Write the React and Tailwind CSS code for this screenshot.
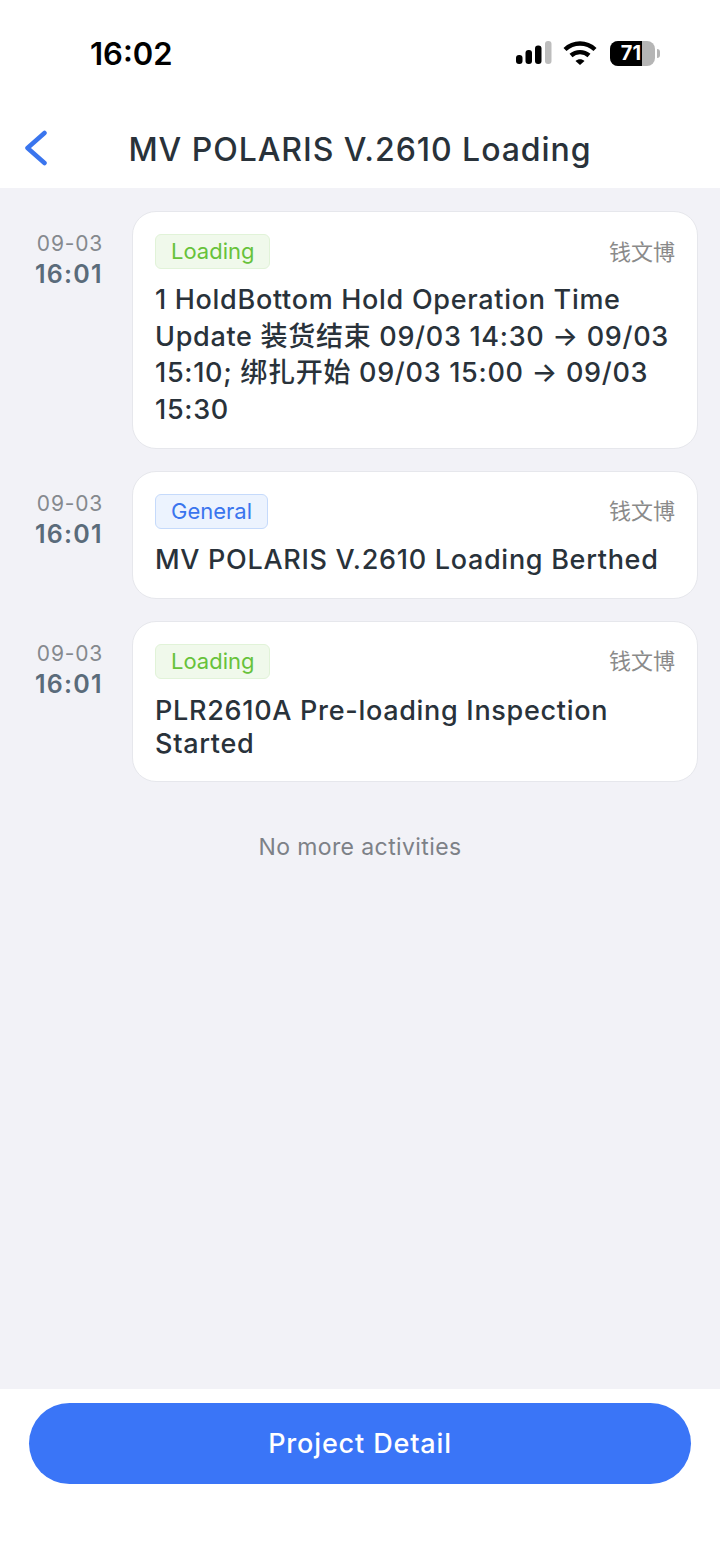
import React from 'react';

const SANS = "font-['Inter','Noto_Sans_CJK_SC',sans-serif]";

const activities = [
    { tag: 'Loading', text: '1 HoldBottom Hold Operation Time Update 装货结束 09/03 14:30 → 09/03 15:10; 绑扎开始 09/03 15:00 → 09/03 15:30' },
    { tag: 'General', text: 'MV POLARIS V.2610 Loading Berthed' },
    { tag: 'Loading', text: 'PLR2610A Pre-loading Inspection Started', tight: true }
];

const SignalIcon = () => (
    <svg width="36" height="24" viewBox="0 0 36 24">
        <rect x="0" y="14" width="6.5" height="9" rx="3" fill="#000" />
        <rect x="9.5" y="9" width="6.5" height="14" rx="3" fill="#000" />
        <rect x="19" y="4.5" width="6.5" height="18.5" rx="3" fill="#000" />
        <rect x="29" y="0" width="6.5" height="23" rx="3" fill="#bdbdbd" />
    </svg>
);

const WifiIcon = () => (
    <svg width="34" height="24" viewBox="0 0 34 24" fill="none" stroke="#000" strokeWidth="4.4">
        <path d="M2 8.5 C10.5 0.5 23.5 0.5 32 8.5" />
        <path d="M8 14.5 C13 10 21 10 26 14.5" />
        <path d="M12.5 20 L17 24 L21.5 20 C19 17.6 15 17.6 12.5 20 Z" fill="#000" stroke="none" />
    </svg>
);

const BatteryIcon = () => (
    <div className="flex items-center ml-[2px]">
        <div className="relative w-[45px] h-[25px] rounded-[8px] overflow-hidden bg-[#b5b5b5]">
            <div className="h-full w-[32px] bg-black" />
            <span className="absolute left-[6px] top-0 w-[30px] text-center text-[20px] leading-[25px] font-bold text-white font-['Inter',sans-serif]">71</span>
        </div>
        <div className="ml-[2px] w-[3px] h-[9px] rounded-r-full bg-[#b5b5b5]" />
    </div>
);

const Tag = ({ label }) => {
    const isLoading = label === 'Loading';
    return (
        <span className={`h-[35px] rounded-[6px] border pl-[15px] flex items-center text-[22px] ${isLoading ? 'pr-[14px] bg-[#f0f9eb] border-[#e1f3d8] text-[#67c23a]' : 'pr-[15px] bg-[#ecf3fe] border-[#c5dafb] text-[#3a75ee]'}`}>
            {label}
        </span>
    );
};

const ActivityRow = ({ tag, text, tight }) => (
    <div className="flex items-start">
        <div className="w-[132px] pr-[29px] pt-[20px] flex flex-col items-end shrink-0">
            <span className="text-[21px] leading-[26px] tracking-[0.8px] text-[#85898e]">09-03</span>
            <span className="text-[25px] leading-[34px] tracking-[1.3px] font-semibold text-[#5a6b7a]">16:01</span>
        </div>
        <div className={`flex-1 bg-white border border-[#e6e7ec] rounded-[24px] pt-[22px] px-[22px] ${tight ? 'pb-[21px]' : 'pb-[19.5px]'}`}>
            <div className="flex items-center justify-between">
                <Tag label={tag} />
                <span className="pt-[1px] text-[22px] text-[#8a8a8a]">钱文博</span>
            </div>
            <p className={`text-[27px] tracking-[0.7px] font-medium text-[#29323a] ${tight ? 'mt-[15px] leading-[33px]' : 'mt-[13px] leading-[36.6px]'}`}>{text}</p>
        </div>
    </div>
);

const App = () => {
    return (
        <div className={`w-[720px] h-[1561px] flex flex-col bg-white overflow-hidden ${SANS}`}>
            {/* Status bar */}
            <div className="h-[106px] shrink-0 flex justify-between pl-[90px] pr-[60px] pt-[36px]">
                <span className="text-[31px] leading-[36px] font-semibold text-black">16:02</span>
                <div className="flex items-center gap-[11px] h-[34px]">
                    <SignalIcon />
                    <WifiIcon />
                    <BatteryIcon />
                </div>
            </div>

            {/* Header */}
            <div className="relative h-[82px] shrink-0 flex items-center justify-center pt-[5px]">
                <svg className="absolute left-[24px] top-[24px]" width="24" height="36" viewBox="0 0 24 36" fill="none" stroke="#3a75ee" strokeWidth="4.5" strokeLinecap="round" strokeLinejoin="round">
                    <path d="M20.5 3 L3.5 18 L20.5 33" />
                </svg>
                <h1 className="text-[32px] tracking-[0.95px] font-medium text-[#29323a]">MV POLARIS V.2610 Loading</h1>
            </div>

            {/* Activity list */}
            <div className="flex-1 bg-[#f2f2f7] pt-[23px] pr-[22px]">
                <div className="flex flex-col gap-[22px]">
                    {activities.map((a, i) => (
                        <ActivityRow key={i} tag={a.tag} text={a.text} tight={a.tight} />
                    ))}
                </div>
                <p className="mt-[50px] pl-[22px] text-center text-[23px] leading-[30px] tracking-[0.4px] text-[#7d8187]">No more activities</p>
            </div>

            {/* Footer */}
            <div className="h-[172px] shrink-0 px-[29px] pt-[14px]">
                <button className="w-full h-[81px] pt-[2px] rounded-full bg-[#3a75f7] text-white text-[27px] tracking-[0.85px] font-medium">
                    Project Detail
                </button>
            </div>
        </div>
    );
};

export default App;
